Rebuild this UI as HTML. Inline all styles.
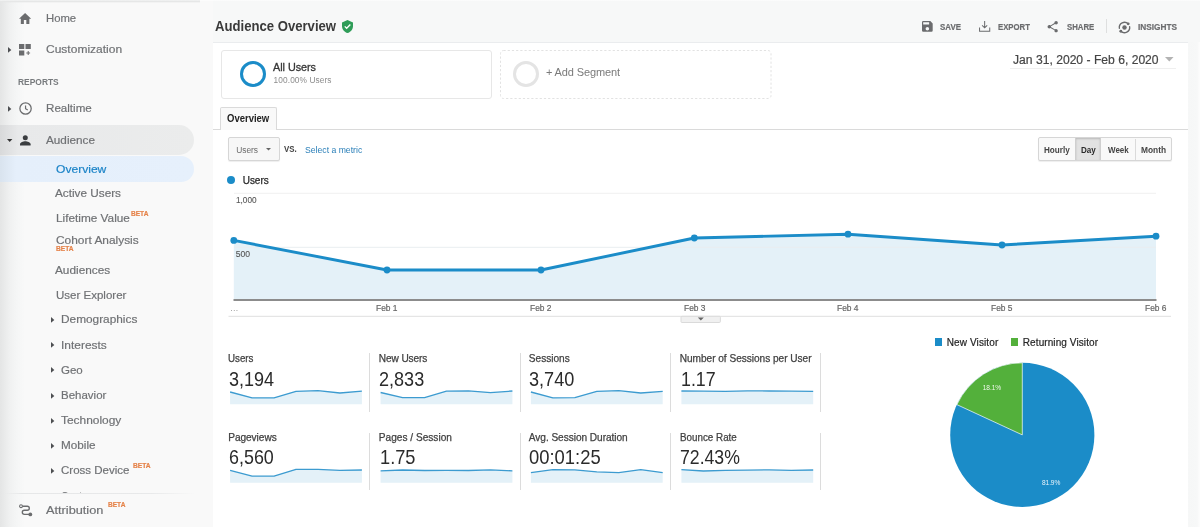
<!DOCTYPE html>
<html lang="en">
<head>
<meta charset="utf-8">
<title>Audience Overview</title>
<style>
*{box-sizing:border-box;margin:0;padding:0}
html,body{width:1200px;height:527px;overflow:hidden;background:#f6f7f7;font-family:"Liberation Sans",sans-serif}
body{position:relative;filter:blur(.6px)}
.a{position:absolute}
.t{position:absolute;line-height:0;height:0;white-space:nowrap;transform-origin:0 0}
svg{position:absolute;overflow:visible}
nav,header,main,section{display:contents}
</style>
</head>
<body>
<header>
<div class="a" style="left:212px;top:0px;width:988px;height:43px;background:#f7f8f8"></div>
</header>
<main>
<div class="a" style="left:212.6px;top:42.3px;width:975.4px;height:484.7px;background:#fff;border-top:1px solid #eaecee"></div>
<div class="a" style="left:1188px;top:42.3px;width:12px;height:484.7px;background:linear-gradient(90deg,#f6f7f7 0,#f7f8f8 9px,#fbfbfb 11px,#fdfdfd 12px)"></div>
<h1 class="t" style="left:215.2px;top:26.3px;font-size:14.6px;color:#3a3a3a;transform:scaleX(0.899);font-weight:bold;">Audience Overview</h1>
<svg style="left:342.3px;top:20.3px" width="11" height="13" viewBox="0 0 22 26"><path d="M11 0 0 4.800v7.200c0 6.700 4.700 12.600 11 14 6.300-1.400 11-7.300 11-14V4.800z" fill="#2f9d58"/><path d="M5.500 12.800l3.800 3.800 7.400-7.600" fill="none" stroke="#fff" stroke-width="2.600"/></svg>
<svg style="left:921.800px;top:21.100px" width="10.700" height="10.700" viewBox="3 3 18 18"><path fill="#6b6c6e" d="M17 3H5a2 2 0 0 0-2 2v14a2 2 0 0 0 2 2h14a2 2 0 0 0 2-2V7l-4-4zm-5 16a3 3 0 1 1 0-6 3 3 0 0 1 0 6zm3-10H5V5h10v4z"/></svg>
<div class="t" style="left:940.3px;top:26.5px;font-size:9.5px;color:#6b6c6e;transform:scaleX(0.834);font-weight:bold;-webkit-text-stroke:0.2px #6b6c6e;">SAVE</div>
<svg style="left:979px;top:20.800px" width="11.300" height="10.700" viewBox="0 0 22 21"><path fill="none" stroke="#6b6c6e" stroke-width="2" d="M11 0v13M6 8.500l5 5 5-5M1 13v7h20v-7"/></svg>
<div class="t" style="left:997.7px;top:26.5px;font-size:9.5px;color:#6b6c6e;transform:scaleX(0.817);font-weight:bold;-webkit-text-stroke:0.2px #6b6c6e;">EXPORT</div>
<svg style="left:1047.300px;top:21px" width="11.400" height="11.400" viewBox="3 2 18 20"><path fill="#6b6c6e" d="M18 16.080c-.760 0-1.440.300-1.960.770L8.910 12.700c.050-.230.090-.460.090-.700s-.040-.470-.090-.700l7.050-4.110c.540.500 1.250.810 2.040.810 1.660 0 3-1.340 3-3s-1.340-3-3-3-3 1.340-3 3c0 .240.040.470.090.700L8.040 9.810C7.500 9.310 6.790 9 6 9c-1.660 0-3 1.340-3 3s1.340 3 3 3c.790 0 1.500-.310 2.040-.810l7.120 4.160c-.050.210-.080.430-.080.650 0 1.610 1.310 2.920 2.920 2.920s2.920-1.310 2.920-2.920-1.310-2.920-2.920-2.920z"/></svg>
<div class="t" style="left:1066.7px;top:26.5px;font-size:9.5px;color:#6b6c6e;transform:scaleX(0.821);font-weight:bold;-webkit-text-stroke:0.2px #6b6c6e;">SHARE</div>
<div class="a" style="left:1106px;top:18.6px;width:1.3px;height:14.6px;background:#dedfdf"></div>
<svg style="left:1118.100px;top:20.600px" width="13" height="13" viewBox="0 0 26 26"><circle cx="13" cy="13" r="4.500" fill="#6b6c6e"/><path fill="none" stroke="#6b6c6e" stroke-width="2.700" stroke-linecap="round" d="M2.70 14.45 A10.4 10.4 0 0 1 20.35 5.65 M23.30 11.55 A10.4 10.4 0 0 1 5.65 20.35"/><circle cx="20.35" cy="5.65" r="2.900" fill="#6b6c6e"/><circle cx="5.65" cy="20.35" r="2.900" fill="#6b6c6e"/></svg>
<div class="t" style="left:1138px;top:26.5px;font-size:9.5px;color:#6b6c6e;transform:scaleX(0.869);font-weight:bold;-webkit-text-stroke:0.2px #6b6c6e;">INSIGHTS</div>
<section>
<div class="a" style="left:220.5px;top:50px;width:271px;height:49px;border:1px solid #e7e7e7;border-radius:3px"></div>
<div class="a" style="left:240px;top:61.2px;width:26px;height:26px;border:3.200px solid #1b8cc8;border-radius:50%"></div>
<div class="t" style="left:273px;top:67.4px;font-size:10.8px;color:#363636;letter-spacing:-0.03px;-webkit-text-stroke:0.3px #363636;">All Users</div>
<div class="t" style="left:273.6px;top:79.7px;font-size:8.3px;color:#8c8c8c;letter-spacing:0.1px;">100.00% Users</div>
<svg style="left:0;top:0" width="1200" height="527" viewBox="0 0 1200 527"><rect x="500.500" y="50.500" width="270.500" height="48" rx="3" fill="none" stroke="#e2e2e2" stroke-dasharray="2.200 2"/></svg>
<div class="a" style="left:512.6px;top:61.2px;width:26px;height:26px;border:3.200px solid #e4e4e4;border-radius:50%"></div>
<div class="t" style="left:546px;top:71.7px;font-size:11px;color:#7a7a7a;letter-spacing:-0.13px;">+ Add Segment</div>
<div class="t" style="left:1012.7px;top:59.7px;font-size:12.5px;color:#454545;transform:scaleX(0.97);-webkit-text-stroke:0.2px #454545;">Jan 31, 2020 - Feb 6, 2020</div>
<div class="a" style="left:1010px;top:68.3px;width:166px;height:1px;background:#efefef"></div>
<svg style="left:1164.700px;top:57.300px" width="8.600" height="4.400" viewBox="0 0 8.600 4.400"><path d="M0 0h8.600L4.300 4.400z" fill="#b3b3b3"/></svg>
</section>
<div class="a" style="left:212.6px;top:128.8px;width:975.4px;height:1px;background:#dadada"></div>
<div class="a" style="left:220px;top:107px;width:57px;height:22.8px;border:1px solid #dadada;border-bottom:none;border-radius:2px 2px 0 0;background:#f9f9f9"></div>
<div class="t" style="left:227.3px;top:118.2px;font-size:11px;color:#222;transform:scaleX(0.864);font-weight:bold;">Overview</div>
<div class="a" style="left:227.7px;top:137.2px;width:52.3px;height:23.7px;border:1px solid #d6d6d6;border-radius:2px;background:#f7f7f7;box-shadow:0 1px 1px rgba(0,0,0,.07)"></div>
<div class="t" style="left:236.3px;top:149.7px;font-size:8.4px;color:#6a6a6a;letter-spacing:-0.06px;">Users</div>
<svg style="left:266.400px;top:148.300px" width="5" height="2.600" viewBox="0 0 5 2.600"><path d="M0 0h5L2.500 2.600z" fill="#666"/></svg>
<div class="t" style="left:283.6px;top:149px;font-size:8.8px;color:#444;transform:scaleX(0.895);font-weight:bold;">VS.</div>
<div class="t" style="left:305px;top:149.7px;font-size:8.4px;color:#2a7fb8;transform:scaleX(1.033);">Select a metric</div>
<div class="a" style="left:1037.8px;top:137.3px;width:134.7px;height:23.7px;border:1px solid #d6d6d6;border-radius:2px;background:#f9f9f9;box-shadow:0 1px 1px rgba(0,0,0,.07)"></div>
<div class="a" style="left:1075.3px;top:137.8px;width:26.2px;height:22.7px;background:#e2e2e2;border-left:1px solid #cfcfcf;border-right:1px solid #cfcfcf;box-shadow:inset 0 1px 2px rgba(0,0,0,.18)"></div>
<div class="a" style="left:1134.5px;top:138.7px;width:1px;height:21.5px;background:#dadada"></div>
<div class="t" style="left:1043.9px;top:149.9px;font-size:8.7px;color:#444;transform:scaleX(0.936);font-weight:bold;">Hourly</div>
<div class="t" style="left:1081.3px;top:149.9px;font-size:8.7px;color:#2a2a2a;transform:scaleX(0.928);font-weight:bold;">Day</div>
<div class="t" style="left:1107.9px;top:149.9px;font-size:8.7px;color:#444;transform:scaleX(0.921);font-weight:bold;">Week</div>
<div class="t" style="left:1140.9px;top:149.9px;font-size:8.7px;color:#444;transform:scaleX(0.962);font-weight:bold;">Month</div>
<div class="a" style="left:227.4px;top:176.3px;width:8px;height:8px;border-radius:50%;background:#1b8cc8"></div>
<div class="t" style="left:242.7px;top:181px;font-size:10px;color:#2a2a2a;letter-spacing:-0.03px;-webkit-text-stroke:0.25px #2a2a2a;">Users</div>
<svg style="left:0;top:0" width="1200" height="527" viewBox="0 0 1200 527">
<line x1="234" x2="1156" y1="193.300" y2="193.300" stroke="#f1f1f1"/>
<polygon points="233.8,240.4 387,270 541,270 694.3,238 848,234.2 1002,245 1156,236.2 1156,299.500 233.800,299.500" fill="#e4f1f8"/>
<line x1="234" x2="1156" y1="247.300" y2="247.300" stroke="#e9eef1"/>
<polyline points="233.8,240.4 387,270 541,270 694.3,238 848,234.2 1002,245 1156,236.2" fill="none" stroke="#1b8cc8" stroke-width="2.900" stroke-linejoin="round"/>
<g fill="#1b8cc8"><circle cx="233.8" cy="240.4" r="3.400"/><circle cx="387" cy="270" r="3.400"/><circle cx="541" cy="270" r="3.400"/><circle cx="694.3" cy="238" r="3.400"/><circle cx="848" cy="234.2" r="3.400"/><circle cx="1002" cy="245" r="3.400"/><circle cx="1156" cy="236.2" r="3.400"/></g>
<line x1="233.500" x2="1156.500" y1="300" y2="300" stroke="#8c8c8c" stroke-width="2"/>
<line x1="228.500" x2="1171" y1="316.300" y2="316.300" stroke="#dfdfdf"/>
<rect x="681" y="316.300" width="39.400" height="6.200" rx="1" fill="#f0f0f0" stroke="#dadada"/>
<path d="M697.800 317.600h6l-3 3z" fill="#666"/>
</svg>
<div class="t" style="left:236.4px;top:200.2px;font-size:8.6px;color:#555;transform:scaleX(0.957);-webkit-text-stroke:0.1px #555;">1,000</div>
<div class="t" style="left:235.8px;top:253.9px;font-size:8.6px;color:#555;letter-spacing:-0.07px;-webkit-text-stroke:0.1px #555;">500</div>
<div class="t" style="left:230px;top:308.2px;font-size:8.5px;color:#9a9a9a;">…</div>
<div class="t" style="left:376.3px;top:308.3px;font-size:9px;color:#666;transform:scaleX(0.934);-webkit-text-stroke:0.2px #666;">Feb 1</div>
<div class="t" style="left:530.3px;top:308.3px;font-size:9px;color:#666;transform:scaleX(0.934);-webkit-text-stroke:0.2px #666;">Feb 2</div>
<div class="t" style="left:683.6px;top:308.3px;font-size:9px;color:#666;transform:scaleX(0.934);-webkit-text-stroke:0.2px #666;">Feb 3</div>
<div class="t" style="left:837.3px;top:308.3px;font-size:9px;color:#666;transform:scaleX(0.934);-webkit-text-stroke:0.2px #666;">Feb 4</div>
<div class="t" style="left:991.3px;top:308.3px;font-size:9px;color:#666;transform:scaleX(0.934);-webkit-text-stroke:0.2px #666;">Feb 5</div>
<div class="t" style="left:1145.3px;top:308.3px;font-size:9px;color:#666;transform:scaleX(0.934);-webkit-text-stroke:0.2px #666;">Feb 6</div>
<section>
<svg style="left:0;top:0" width="1200" height="527" viewBox="0 0 1200 527">
<polygon points="230.1,392 252.07,397.8 274.03,397.8 296,391.3 317.97,390.7 339.93,393 361.9,391.2 361.9,404.2 230.1,404.2" fill="#e4f1f8"/>
<polyline points="230.1,392 252.07,397.8 274.03,397.8 296,391.3 317.97,390.7 339.93,393 361.9,391.2" fill="none" stroke="#3c9bd0" stroke-width="1.300" stroke-linejoin="round"/>
<polygon points="380.6,392.5 402.57,397.7 424.53,397.7 446.5,391.2 468.47,390.8 490.43,392.6 512.4,391 512.4,404.2 380.6,404.2" fill="#e4f1f8"/>
<polyline points="380.6,392.5 402.57,397.7 424.53,397.7 446.5,391.2 468.47,390.8 490.43,392.6 512.4,391" fill="none" stroke="#3c9bd0" stroke-width="1.300" stroke-linejoin="round"/>
<polygon points="530.9,392 552.87,397.8 574.83,397.6 596.8,391.3 618.77,390.7 640.73,393 662.7,391.3 662.7,404.2 530.9,404.2" fill="#e4f1f8"/>
<polyline points="530.9,392 552.87,397.8 574.83,397.6 596.8,391.3 618.77,390.7 640.73,393 662.7,391.3" fill="none" stroke="#3c9bd0" stroke-width="1.300" stroke-linejoin="round"/>
<polygon points="681.4,391 703.37,391.2 725.33,391.4 747.3,390.8 769.27,391 791.23,391.2 813.2,391.4 813.2,404.2 681.4,404.2" fill="#e4f1f8"/>
<polyline points="681.4,391 703.37,391.2 725.33,391.4 747.3,390.8 769.27,391 791.23,391.2 813.2,391.4" fill="none" stroke="#3c9bd0" stroke-width="1.300" stroke-linejoin="round"/>
<polygon points="230.1,470.3 252.07,476.2 274.03,476.2 296,469.3 317.97,469.4 339.93,470.4 361.9,470 361.9,482.8 230.1,482.8" fill="#e4f1f8"/>
<polyline points="230.1,470.3 252.07,476.2 274.03,476.2 296,469.3 317.97,469.4 339.93,470.4 361.9,470" fill="none" stroke="#3c9bd0" stroke-width="1.300" stroke-linejoin="round"/>
<polygon points="380.6,470.8 402.57,470 424.53,470.5 446.5,470.3 468.47,470.5 490.43,469.8 512.4,470.8 512.4,482.8 380.6,482.8" fill="#e4f1f8"/>
<polyline points="380.6,470.8 402.57,470 424.53,470.5 446.5,470.3 468.47,470.5 490.43,469.8 512.4,470.8" fill="none" stroke="#3c9bd0" stroke-width="1.300" stroke-linejoin="round"/>
<polygon points="530.9,472.6 552.87,469.6 574.83,469.8 596.8,471.8 618.77,472.6 640.73,469.6 662.7,472.6 662.7,482.8 530.9,482.8" fill="#e4f1f8"/>
<polyline points="530.9,472.6 552.87,469.6 574.83,469.8 596.8,471.8 618.77,472.6 640.73,469.6 662.7,472.6" fill="none" stroke="#3c9bd0" stroke-width="1.300" stroke-linejoin="round"/>
<polygon points="681.4,469.6 703.37,471 725.33,470.4 747.3,470.2 769.27,469.8 791.23,470.4 813.2,470 813.2,482.8 681.4,482.8" fill="#e4f1f8"/>
<polyline points="681.4,469.6 703.37,471 725.33,470.4 747.3,470.2 769.27,469.8 791.23,470.4 813.2,470" fill="none" stroke="#3c9bd0" stroke-width="1.300" stroke-linejoin="round"/>
</svg>
<div class="t" style="left:228.2px;top:358.6px;font-size:10.1px;color:#424242;transform:scaleX(0.967);-webkit-text-stroke:0.25px #424242;">Users</div>
<div class="t" style="left:228.9px;top:378.6px;font-size:20.4px;color:#2b2b2b;transform:scaleX(0.884);">3,194</div>
<div class="a" style="left:369px;top:352.8px;width:1px;height:59.2px;background:#dcdcdc"></div>
<div class="t" style="left:378.8px;top:358.6px;font-size:10.1px;color:#424242;letter-spacing:-0.1px;-webkit-text-stroke:0.25px #424242;">New Users</div>
<div class="t" style="left:379.1px;top:378.6px;font-size:20.4px;color:#2b2b2b;transform:scaleX(0.886);">2,833</div>
<div class="a" style="left:519.8px;top:352.8px;width:1px;height:59.2px;background:#dcdcdc"></div>
<div class="t" style="left:528.8px;top:358.6px;font-size:10.1px;color:#424242;-webkit-text-stroke:0.25px #424242;">Sessions</div>
<div class="t" style="left:529.3px;top:378.6px;font-size:20.4px;color:#2b2b2b;transform:scaleX(0.888);">3,740</div>
<div class="a" style="left:669.8px;top:352.8px;width:1px;height:59.2px;background:#dcdcdc"></div>
<div class="t" style="left:679.7px;top:358.6px;font-size:10.1px;color:#424242;letter-spacing:-0.02px;-webkit-text-stroke:0.25px #424242;">Number of Sessions per User</div>
<div class="t" style="left:680.8px;top:378.6px;font-size:20.4px;color:#2b2b2b;transform:scaleX(0.874);">1.17</div>
<div class="a" style="left:820.2px;top:352.8px;width:1px;height:59.2px;background:#dcdcdc"></div>
<div class="t" style="left:228.2px;top:438.2px;font-size:10.1px;color:#424242;letter-spacing:-0.04px;-webkit-text-stroke:0.25px #424242;">Pageviews</div>
<div class="t" style="left:228.9px;top:457px;font-size:20.4px;color:#2b2b2b;transform:scaleX(0.878);">6,560</div>
<div class="a" style="left:369px;top:432.6px;width:1px;height:57.7px;background:#dcdcdc"></div>
<div class="t" style="left:378.8px;top:438.2px;font-size:10.1px;color:#424242;letter-spacing:0.01px;-webkit-text-stroke:0.25px #424242;">Pages / Session</div>
<div class="t" style="left:380px;top:457px;font-size:20.4px;color:#2b2b2b;transform:scaleX(0.894);">1.75</div>
<div class="a" style="left:519.8px;top:432.6px;width:1px;height:57.7px;background:#dcdcdc"></div>
<div class="t" style="left:528.8px;top:438.2px;font-size:10.1px;color:#424242;letter-spacing:-0.04px;-webkit-text-stroke:0.25px #424242;">Avg. Session Duration</div>
<div class="t" style="left:529.3px;top:457px;font-size:20.4px;color:#2b2b2b;transform:scaleX(0.903);">00:01:25</div>
<div class="a" style="left:669.8px;top:432.6px;width:1px;height:57.7px;background:#dcdcdc"></div>
<div class="t" style="left:679.7px;top:438.2px;font-size:10.1px;color:#424242;transform:scaleX(0.973);-webkit-text-stroke:0.25px #424242;">Bounce Rate</div>
<div class="t" style="left:679.9px;top:457px;font-size:20.4px;color:#2b2b2b;transform:scaleX(0.866);">72.43%</div>
<div class="a" style="left:820.2px;top:432.6px;width:1px;height:57.7px;background:#dcdcdc"></div>
</section>
<section>
<div class="a" style="left:934.7px;top:338.3px;width:7.6px;height:7.6px;background:#1b8cc8"></div>
<div class="t" style="left:946.7px;top:342.7px;font-size:10px;color:#262626;letter-spacing:0.12px;-webkit-text-stroke:0.2px #262626;">New Visitor</div>
<div class="a" style="left:1010.9px;top:338.3px;width:7.6px;height:7.6px;background:#53b03b"></div>
<div class="t" style="left:1022.8px;top:342.7px;font-size:10px;color:#262626;letter-spacing:0.09px;-webkit-text-stroke:0.2px #262626;">Returning Visitor</div>
<svg style="left:0;top:0" width="1200" height="527" viewBox="0 0 1200 527">
<circle cx="1022.3" cy="434.9" r="72.1" fill="#1b8cc8"/>
<path d="M1022.3 434.9 L1022.3 362.8 A72.1 72.1 0 0 0 956.87 404.61 Z" fill="#53b03b" stroke="#fff" stroke-width=".7" stroke-linejoin="round"/>
</svg>
<div class="t" style="left:982.7px;top:387.5px;font-size:6.6px;color:#eef7ea;letter-spacing:-0.05px;">18.1%</div>
<div class="t" style="left:1042px;top:483.3px;font-size:6.6px;color:#e8f3fa;letter-spacing:-0.1px;">81.9%</div>
</section>
</main>
<nav>
<div class="a" style="left:0px;top:0px;width:205px;height:527px;background:linear-gradient(90deg,#e4e5e5 0,#eaebeb 5px,#f0f1f1 10px,#f5f6f6 17px,#f9f9f9 25px,#f9f9f9 100%)"></div>
<div class="a" style="left:205px;top:0px;width:7.6px;height:527px;background:#f9f9f9"></div>
<div class="a" style="left:0px;top:125px;width:193.5px;height:30px;background:linear-gradient(90deg,#d8d9da 0,#e8e9ea 18px,#ebecec 100%);border-radius:0 15px 15px 0"></div>
<div class="a" style="left:0px;top:156px;width:193.5px;height:25.5px;background:linear-gradient(90deg,#d9e3ee 0,#e5effb 16px,#e6f0fc 100%);border-radius:0 13px 13px 0"></div>
<svg style="left:19.300px;top:12.700px" width="12.200" height="11" viewBox="2 3 20 18"><path fill="#6b6c6e" d="M10 21v-6.500h4V21h5v-8.500h3L12 3 2 12.500h3V21z"/></svg>
<div class="t" style="left:46.2px;top:17.6px;font-size:10.9px;color:#6f7174;transform:scaleX(1.038);-webkit-text-stroke:0.18px #6f7174;">Home</div>
<svg style="left:8.4px;top:46.7px" width="3.3" height="5.8" viewBox="0 0 3.3 5.8"><path d="M0 0L3.3 2.9L0 5.8z" fill="#4d4f52"/></svg>
<svg style="left:19.300px;top:43.500px" width="12" height="11.700" viewBox="0 0 12 11.500"><path fill="#6b6c6e" d="M0 0h5.300v5H0zM6.500 0h5.300v5H6.500zM0 6.300h5.300v5H0zM8.700 7h1v1.400h1.400v1H9.700v1.400h-1V9.400H7.300v-1h1.400z"/></svg>
<div class="t" style="left:46.2px;top:49.2px;font-size:10.9px;color:#6f7174;transform:scaleX(1.103);-webkit-text-stroke:0.18px #6f7174;">Customization</div>
<div class="t" style="left:17.6px;top:82.1px;font-size:9.2px;color:#777a7d;transform:scaleX(0.917);font-weight:bold;">REPORTS</div>
<svg style="left:8.1px;top:106.2px" width="3.3" height="5.8" viewBox="0 0 3.3 5.8"><path d="M0 0L3.3 2.9L0 5.8z" fill="#4d4f52"/></svg>
<svg style="left:18.600px;top:102.400px" width="13.100" height="13.100" viewBox="0 0 24 24"><circle cx="12" cy="12" r="10.400" fill="none" stroke="#6b6c6e" stroke-width="2.300"/><path d="M12 6.500V12.200l4 2.400" fill="none" stroke="#6b6c6e" stroke-width="2.200"/></svg>
<div class="t" style="left:46.2px;top:108.4px;font-size:10.9px;color:#6f7174;transform:scaleX(1.065);-webkit-text-stroke:0.18px #6f7174;">Realtime</div>
<svg style="left:6.600px;top:138.600px" width="5.400" height="3" viewBox="0 0 5.400 3"><path d="M0 0h5.400L2.700 3z" fill="#333"/></svg>
<svg style="left:19.600px;top:135px" width="10.600" height="10.800" viewBox="0 0 22 21"><circle cx="11" cy="5.200" r="5.200" fill="#3a3d40"/><path d="M0 21v-2.500c0-4 7-6 11-6s11 2 11 6V21z" fill="#3a3d40"/></svg>
<div class="t" style="left:46.2px;top:140px;font-size:10.9px;color:#6f7174;transform:scaleX(1.078);-webkit-text-stroke:0.18px #6f7174;">Audience</div>
<div class="t" style="left:55.6px;top:168.8px;font-size:10.9px;color:#1b83c7;transform:scaleX(1.109);-webkit-text-stroke:0.18px #1b83c7;">Overview</div>
<div class="t" style="left:55.4px;top:193.4px;font-size:10.9px;color:#6f7174;transform:scaleX(1.079);-webkit-text-stroke:0.18px #6f7174;">Active Users</div>
<div class="t" style="left:55.6px;top:218.4px;font-size:10.9px;color:#6f7174;transform:scaleX(1.084);-webkit-text-stroke:0.18px #6f7174;">Lifetime Value</div>
<div class="t" style="left:130.6px;top:214.4px;font-size:7.2px;color:#e5834a;transform:scaleX(0.913);font-weight:bold;-webkit-text-stroke:0.2px #e5834a;">BETA</div>
<div class="t" style="left:55.6px;top:240px;font-size:10.9px;color:#6f7174;transform:scaleX(1.093);-webkit-text-stroke:0.18px #6f7174;">Cohort Analysis</div>
<div class="t" style="left:55.6px;top:249.2px;font-size:7.2px;color:#e5834a;transform:scaleX(0.923);font-weight:bold;-webkit-text-stroke:0.2px #e5834a;">BETA</div>
<div class="t" style="left:55.4px;top:269.6px;font-size:10.9px;color:#6f7174;transform:scaleX(1.084);-webkit-text-stroke:0.18px #6f7174;">Audiences</div>
<div class="t" style="left:55.6px;top:295px;font-size:10.9px;color:#6f7174;transform:scaleX(1.057);-webkit-text-stroke:0.18px #6f7174;">User Explorer</div>
<svg style="left:51.1px;top:316.8px" width="3.3" height="5.8" viewBox="0 0 3.3 5.8"><path d="M0 0L3.3 2.9L0 5.8z" fill="#4d4f52"/></svg>
<div class="t" style="left:60.6px;top:319.4px;font-size:10.9px;color:#6f7174;transform:scaleX(1.087);-webkit-text-stroke:0.18px #6f7174;">Demographics</div>
<svg style="left:51.1px;top:342.4px" width="3.3" height="5.8" viewBox="0 0 3.3 5.8"><path d="M0 0L3.3 2.9L0 5.8z" fill="#4d4f52"/></svg>
<div class="t" style="left:60.6px;top:345px;font-size:10.9px;color:#6f7174;transform:scaleX(1.096);-webkit-text-stroke:0.18px #6f7174;">Interests</div>
<svg style="left:51.1px;top:367.4px" width="3.3" height="5.8" viewBox="0 0 3.3 5.8"><path d="M0 0L3.3 2.9L0 5.8z" fill="#4d4f52"/></svg>
<div class="t" style="left:60.6px;top:370px;font-size:10.9px;color:#6f7174;transform:scaleX(1.058);-webkit-text-stroke:0.18px #6f7174;">Geo</div>
<svg style="left:51.1px;top:392.8px" width="3.3" height="5.8" viewBox="0 0 3.3 5.8"><path d="M0 0L3.3 2.9L0 5.8z" fill="#4d4f52"/></svg>
<div class="t" style="left:60.6px;top:395.4px;font-size:10.9px;color:#6f7174;transform:scaleX(1.055);-webkit-text-stroke:0.18px #6f7174;">Behavior</div>
<svg style="left:51.1px;top:417.8px" width="3.3" height="5.8" viewBox="0 0 3.3 5.8"><path d="M0 0L3.3 2.9L0 5.8z" fill="#4d4f52"/></svg>
<div class="t" style="left:60.6px;top:420.4px;font-size:10.9px;color:#6f7174;transform:scaleX(1.095);-webkit-text-stroke:0.18px #6f7174;">Technology</div>
<svg style="left:51.1px;top:442.8px" width="3.3" height="5.8" viewBox="0 0 3.3 5.8"><path d="M0 0L3.3 2.9L0 5.8z" fill="#4d4f52"/></svg>
<div class="t" style="left:60.6px;top:445.4px;font-size:10.9px;color:#6f7174;transform:scaleX(1.077);-webkit-text-stroke:0.18px #6f7174;">Mobile</div>
<svg style="left:51.1px;top:467.8px" width="3.3" height="5.8" viewBox="0 0 3.3 5.8"><path d="M0 0L3.3 2.9L0 5.8z" fill="#4d4f52"/></svg>
<div class="t" style="left:60.6px;top:470.4px;font-size:10.9px;color:#6f7174;transform:scaleX(1.058);-webkit-text-stroke:0.18px #6f7174;">Cross Device</div>
<div class="t" style="left:132.8px;top:466.2px;font-size:7.2px;color:#e5834a;transform:scaleX(0.923);font-weight:bold;-webkit-text-stroke:0.2px #e5834a;">BETA</div>
<div class="a" style="left:0;top:480px;width:212px;height:13px;overflow:hidden">
<div class="t" style="left:60.6px;top:16.2px;font-size:10.9px;color:#6f7174;transform:scaleX(0.943);-webkit-text-stroke:0.18px #6f7174;">Custom</div>
</div>
<div class="a" style="left:0px;top:493px;width:212px;height:34px;background:linear-gradient(90deg,#e4e5e5 0,#eaebeb 5px,#f0f1f1 10px,#f5f6f6 17px,#f9f9f9 25px,#f9f9f9 100%)"></div>
<div class="a" style="left:0px;top:492.6px;width:212px;height:1px;background:linear-gradient(90deg,rgba(230,231,232,0) 0,#e6e7e8 22px,#e8e9ea 150px,rgba(232,233,234,0) 195px)"></div>
<svg style="left:19px;top:504px" width="13.500" height="12.500" viewBox="0 0 13.500 12.500"><path d="M3 2.200H8.300a2 2 0 0 1 0 4H5.400a2.100 2.100 0 0 0 0 4.200H10" fill="none" stroke="#6b6c6e" stroke-width="1.350"/><circle cx="2" cy="2.200" r="1.400" fill="#f8f9f9" stroke="#6b6c6e" stroke-width="1.100"/><circle cx="11.300" cy="10.400" r="1.900" fill="#6b6c6e"/></svg>
<div class="t" style="left:46.2px;top:510px;font-size:10.9px;color:#6f7174;transform:scaleX(1.17);-webkit-text-stroke:0.18px #6f7174;">Attribution</div>
<div class="t" style="left:107.6px;top:505.4px;font-size:7.2px;color:#e5834a;transform:scaleX(0.913);font-weight:bold;-webkit-text-stroke:0.2px #e5834a;">BETA</div>
</nav>
<div class="a" style="left:0px;top:0px;width:200px;height:2.6px;background:linear-gradient(#f4f5f5,#e6e7e7 50%,rgba(248,249,249,0))"></div>
<div class="a" style="left:200px;top:0px;width:1000px;height:1.2px;background:linear-gradient(#fff,rgba(255,255,255,0))"></div>
</body>
</html>
